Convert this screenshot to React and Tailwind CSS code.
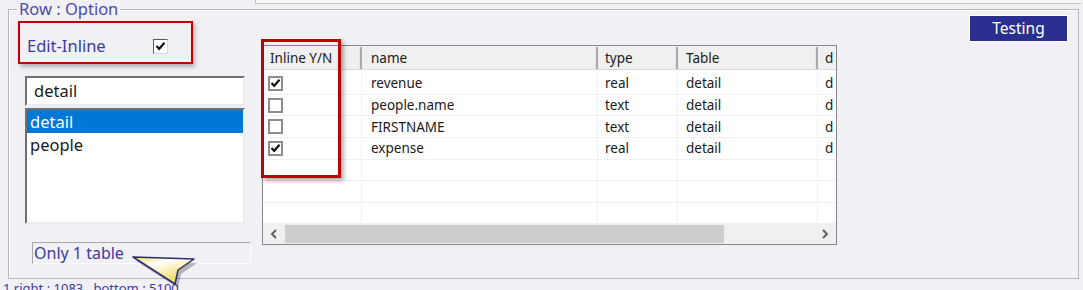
import React from "react";

const rows = [
  { on: true, name: "revenue", type: "real", table: "detail" },
  { on: false, name: "people.name", type: "text", table: "detail" },
  { on: false, name: "FIRSTNAME", type: "text", table: "detail" },
  { on: true, name: "expense", type: "real", table: "detail" },
  null,
  null,
  null,
];

const Check = ({ on, cls }) => (
  <div className={"flex items-center justify-center bg-white " + cls}>
    {on && (
      <svg width="11" height="10" viewBox="0 0 11 10">
        <path d="M1.5 5 L4.2 7.8 L9.5 1.8" fill="none" stroke="#111" strokeWidth="2.2" />
      </svg>
    )}
  </div>
);

const Cell = ({ w, children, cls = "" }) => (
  <div className={"h-full shrink-0 flex items-center border-r border-[#f0f0f0] " + w + " " + cls}>
    {children}
  </div>
);

const HeadCell = ({ w, children, cls = "" }) => (
  <div className={"h-full shrink-0 flex items-center border-r-2 border-r-[#a9a9a9] shadow-[inset_-1px_0_0_#e6e6e6] " + w + " " + cls}>
    {children}
  </div>
);

export default function App() {
  return (
    <div
      className="relative h-[290px] w-[1083px] overflow-hidden bg-[#f0f0f5] text-[#1a1a1a]"
      style={{ fontFamily: '"Noto Sans", "Open Sans", sans-serif' }}
    >
      {/* panel above, cut off */}
      <div className="ml-[255px] mr-[2px] h-[4px] border-l border-b border-[#c4c4c4] bg-[#f7f7f7]" />

      <fieldset className="-mt-[4px] ml-[8px] w-[1071px] h-[279px] border border-[#b8b8b8] shadow-[inset_1px_1px_0_#ffffff] pl-[8px]">
        <legend className="px-[2px] text-[16.5px] leading-[18px] text-[#4b4bae]">Row : Option</legend>

        <div className="flex">
          {/* left column */}
          <div className="w-[245px] shrink-0 flex flex-col">
            <div className="ml-px mt-[3px] w-[175px] h-[43px] border-2 border-[#c00000] shadow-[2px_3px_4px_rgba(0,0,0,0.25)] flex items-center pt-[7px] pl-[7px]">
              <span className="w-[126px] text-[16.5px] text-[#3b3ba3]">Edit-Inline</span>
              <Check on cls="w-[15px] h-[15px] border border-t-[#5a5a5a] border-l-[#5a5a5a] border-r-[#d8d8d8] border-b-[#d8d8d8]" />
            </div>

            <div className="ml-[8px] mt-[12px] w-[220px] h-[30px] bg-white border-2 border-t-[#6f6f6f] border-l-[#6f6f6f] border-r-[#ececec] border-b-[#ececec] flex items-center pl-[7px] text-[16.5px]">
              detail
            </div>

            <div className="ml-[8px] mt-[2px] w-[220px] h-[116px] bg-white border-2 border-t-[#6f6f6f] border-l-[#6f6f6f] border-r-[#ececec] border-b-[#ececec] flex flex-col text-[16.5px]">
              <div className="h-[23px] bg-[#0078d7] text-white pl-[3px] leading-[23px]">detail</div>
              <div className="h-[23px] pl-[3px] leading-[23px]">people</div>
            </div>

            <div className="ml-[15px] mt-[18px] w-[219px] h-[22px] border border-t-[#a8a8a8] border-l-[#a8a8a8] border-r-[#ffffff] border-b-[#ffffff] flex items-center pl-px text-[16px] text-[#3b3ba3]">
              Only 1 table
            </div>
          </div>

          {/* right column */}
          <div className="flex-1 flex flex-col pr-[10px]">
            <div className="-mt-[3px] flex justify-end">
              <button className="w-[99px] h-[27px] bg-[#2a2e8e] border border-white text-white text-[15.5px] leading-none">
                Testing
              </button>
            </div>

            <div className="relative mt-[3px] w-[575px] h-[200px] border border-[#828790] bg-white flex flex-col text-[13.5px]">
              <div className="h-[24px] shrink-0 flex bg-[#f0f0f0] border-b border-[#d8d8d8] pt-px">
                <HeadCell w="w-[99px]" cls="pl-[7px]">Inline Y/N</HeadCell>
                <HeadCell w="w-[236px]" cls="pl-[9px]">name</HeadCell>
                <HeadCell w="w-[80px]" cls="pl-[7px]">type</HeadCell>
                <HeadCell w="w-[140px]" cls="pl-[8px]">Table</HeadCell>
                <div className="flex-1 flex items-center pl-[7px] overflow-hidden">d</div>
              </div>

              <div className="flex-1 overflow-hidden pt-[3px]">
                {rows.map((r, i) => (
                  <div key={i} className="h-[21.7px] flex border-b border-[#f0f0f0]">
                    <Cell w="w-[99px]" cls="pl-[5px]">
                      {r && <Check on={r.on} cls="w-[15px] h-[15px] border-2 border-[#8d8d8d]" />}
                    </Cell>
                    <Cell w="w-[236px]" cls="pl-[9px]">{r && r.name}</Cell>
                    <Cell w="w-[80px]" cls="pl-[7px]">{r && r.type}</Cell>
                    <Cell w="w-[140px]" cls="pl-[8px]">{r && r.table}</Cell>
                    <div className="flex-1 flex items-center pl-[7px] overflow-hidden">{r && "d"}</div>
                  </div>
                ))}
              </div>

              <div className="h-[21px] shrink-0 bg-[#f0f0f0] flex items-center">
                <div className="w-[22px] flex justify-center">
                  <svg width="8" height="10" viewBox="0 0 8 10">
                    <path d="M6 1 L2 5 L6 9" fill="none" stroke="#606060" strokeWidth="2" />
                  </svg>
                </div>
                <div className="w-[439px] h-[18px] bg-[#cdcdcd]" />
                <div className="flex-1" />
                <div className="w-[22px] flex justify-center">
                  <svg width="8" height="10" viewBox="0 0 8 10">
                    <path d="M2 1 L6 5 L2 9" fill="none" stroke="#606060" strokeWidth="2" />
                  </svg>
                </div>
              </div>

              {/* highlight box over first column */}
              <div className="absolute -left-[2px] -top-[7px] w-[80px] h-[139px] border-[3px] border-[#c00000] shadow-[3px_3px_4px_rgba(0,0,0,0.3)]" />
            </div>
          </div>
        </div>
      </fieldset>

      <div className="mt-[3px] ml-[3px] text-[13px] text-[#3b3ba3] leading-none">1 right : 1083 , bottom : 5100</div>

      {/* tooltip pointer */}
      <svg className="absolute left-[128px] top-[250px]" width="76" height="42" viewBox="0 0 76 42">
        <defs>
          <linearGradient id="yg" x1="0" y1="0" x2="0.6" y2="1">
            <stop offset="0" stopColor="#f3df52" />
            <stop offset="0.35" stopColor="#ffffff" />
            <stop offset="1" stopColor="#f0d648" />
          </linearGradient>
        </defs>
        <polygon points="8,11 69,13 53,24 50,38" fill="rgba(0,0,0,0.25)" />
        <polygon points="5,7 66,9 50,20 47,34" fill="url(#yg)" stroke="#2c2c6e" strokeWidth="1.5" strokeLinejoin="round" />
      </svg>
    </div>
  );
}
